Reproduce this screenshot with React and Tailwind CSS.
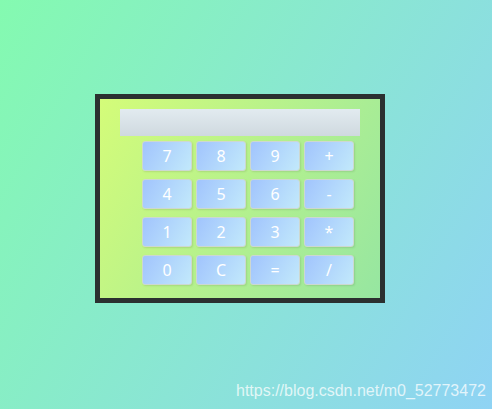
import React from 'react';

const keys = ['7', '8', '9', '+', '4', '5', '6', '-', '1', '2', '3', '*', '0', 'C', '=', '/'];

const App = () => {
    return (
        <div className="w-[492px] h-[409px] bg-[linear-gradient(120deg,#84fab0_0%,#8fd3f4_100%)] pt-[94px] pl-[95px] font-['Noto_Sans','Open_Sans',sans-serif]">
            <div className="w-[290px] h-[209px] border-[5px] border-[#2b3030] bg-[linear-gradient(120deg,#d4fc79_0%,#96e6a1_100%)] pt-[10px]">
                <div className="ml-[20px] w-[240px] h-[27px] bg-[linear-gradient(to_top,#cfd9df_0%,#e2ebf0_100%)]"></div>
                <div className="ml-[42px] mt-[5px] grid grid-cols-[repeat(4,50px)] gap-x-[4px] gap-y-[8px]">
                    {keys.map(k => (
                        <button
                            key={k}
                            className="h-[30px] rounded-[3px] border border-[#cdd8d0] bg-[linear-gradient(120deg,#a1c4fd_0%,#c2e9fb_100%)] shadow-[1px_1px_2px_rgba(0,0,0,0.1)] text-white text-[16px] leading-none flex items-center justify-center"
                        >
                            {k}
                        </button>
                    ))}
                </div>
            </div>
            <div className="absolute left-[236px] top-[381px] text-[16px] leading-[20px] text-white/75 font-['Liberation_Sans',Arial,sans-serif]">
                https://blog.csdn.net/m0_52773472
            </div>
        </div>
    );
};

export default App;
